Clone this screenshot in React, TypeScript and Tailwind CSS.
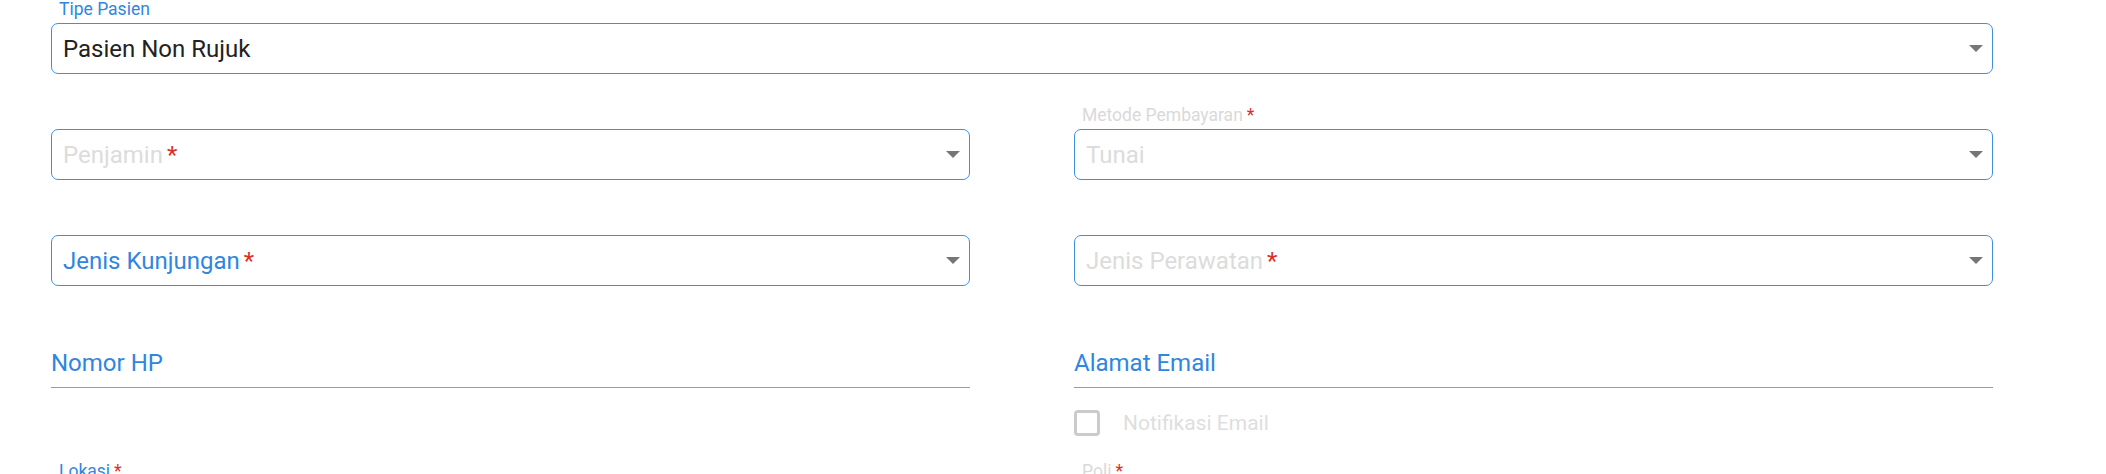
import React from 'react';

const blue = 'text-[#2f86df]';

function Arrow() {
  return (
    <svg width="14" height="7" viewBox="0 0 14 7" className="shrink-0">
      <path d="M0 0 L14 0 L7 7 Z" fill="#767676" />
    </svg>
  );
}

function Star() {
  return <span className="text-[#d93025] ml-[4px]">*</span>;
}

interface SelectFieldProps {
  label?: string;
  labelTone?: 'blue' | 'muted';
  value?: string;
  placeholder?: string;
  placeholderTone?: 'blue' | 'muted';
  required?: boolean;
  labelRequired?: boolean;
}

function SelectField({
  label,
  labelTone = 'muted',
  value,
  placeholder,
  placeholderTone = 'muted',
  required,
  labelRequired,
}: SelectFieldProps) {
  return (
    <div>
      <div
        className={`h-[23px] pl-[8px] text-[17.5px] leading-[19px] ${
          labelTone === 'blue' ? blue : 'text-[#d9d9d9]'
        }`}
      >
        {label}
        {label && labelRequired && <Star />}
      </div>
      <div className="h-[51px] rounded-[7px] border border-[#3f8fdd] flex items-center pl-[11px] pr-[9px]">
        <div className="flex-1 text-[24px] leading-[28px]">
          {value ? (
            <span className="text-[#222]">{value}</span>
          ) : (
            <span className={placeholderTone === 'blue' ? blue : 'text-[#dcdcdc]'}>
              {placeholder}
              {required && <Star />}
            </span>
          )}
        </div>
        <Arrow />
      </div>
    </div>
  );
}

function TextField({ label }: { label: string }) {
  return (
    <div className="border-b border-[#9a9a9a] pb-[10px]">
      <div className={`text-[24px] leading-[28px] ${blue}`}>{label}</div>
    </div>
  );
}

export default function App() {
  return (
    <div className="min-h-screen bg-white font-['Roboto','Liberation_Sans',sans-serif]">
      <div className="w-[1942px] ml-[51px] pb-[40px]">
        <SelectField label="Tipe Pasien" labelTone="blue" value="Pasien Non Rujuk" />

        <div className="grid grid-cols-2 gap-x-[104px] mt-[32px]">
          <SelectField placeholder="Penjamin" required />
          <SelectField label="Metode Pembayaran" labelRequired placeholder="Tunai" />
        </div>

        <div className="grid grid-cols-2 gap-x-[104px] mt-[32px]">
          <SelectField placeholder="Jenis Kunjungan" placeholderTone="blue" required />
          <SelectField placeholder="Jenis Perawatan" required />
        </div>

        <div className="grid grid-cols-2 gap-x-[104px] mt-[63px]">
          <div className="flex flex-col">
            <TextField label="Nomor HP" />
            <div className="mt-[74px]">
              <SelectField label="Lokasi" labelTone="blue" labelRequired placeholder="" />
            </div>
          </div>
          <div className="flex flex-col">
            <TextField label="Alamat Email" />
            <label className="mt-[22px] h-[26px] flex items-center">
              <span className="w-[26px] h-[26px] rounded-[4px] border-[3px] border-[#cbcbcb] bg-white" />
              <span className="ml-[23px] text-[21px] leading-[26px] text-[#dedede]">Notifikasi Email</span>
            </label>
            <div className="mt-[26px]">
              <SelectField label="Poli" labelRequired placeholder="" />
            </div>
          </div>
        </div>
      </div>
    </div>
  );
}
